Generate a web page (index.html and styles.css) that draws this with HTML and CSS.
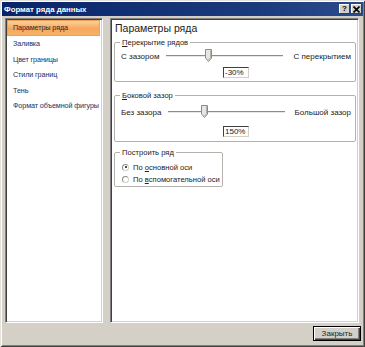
FILE: index.html
```html
<!DOCTYPE html>
<html>
<head>
<meta charset="utf-8">
<link rel="stylesheet" href="styles.css">
</head>
<body>
<div class="window">
  <div class="titlebar">
    <span class="title">Формат ряда данных</span>
    <div class="tbtns">
      <span class="tbtn">?</span>
      <span class="tbtn close">
        <svg width="7" height="7" viewBox="0 0 7 7"><path d="M0.5 0.5 L6.5 6.5 M6.5 0.5 L0.5 6.5" stroke="#000" stroke-width="1.6"/></svg>
      </span>
    </div>
  </div>
  <div class="main">
    <div class="panel nav">
      <div class="item sel">Параметры ряда</div>
      <div class="item">Заливка</div>
      <div class="item">Цвет границы</div>
      <div class="item">Стили границ</div>
      <div class="item">Тень</div>
      <div class="item">Формат объемной фигуры</div>
    </div>
    <div class="panel content">
      <div class="heading">Параметры ряда</div>
      <fieldset class="group g1">
        <legend><u>П</u>ерекрытие рядов</legend>
        <div class="slider-row">
          <span class="lbl">С зазором</span>
          <div class="track"><span class="thumb" style="left:36%"><svg width="7" height="13" viewBox="0 0 7 13"><path d="M0.5 0.5 H6.5 V9 L3.5 12.5 L0.5 9 Z" fill="#e8e6e0" stroke="#8a8a8a"/><path d="M5.5 1.5 V8.6 L3.5 11" fill="none" stroke="#b0aea8"/></svg></span></div>
          <span class="rlbl">С перекрытием</span>
        </div>
        <div class="value-row"><span class="input">-30%</span></div>
      </fieldset>
      <fieldset class="group g2">
        <legend><u>Б</u>оковой зазор</legend>
        <div class="slider-row">
          <span class="lbl">Без зазора</span>
          <div class="track"><span class="thumb" style="left:31%"><svg width="7" height="13" viewBox="0 0 7 13"><path d="M0.5 0.5 H6.5 V9 L3.5 12.5 L0.5 9 Z" fill="#e8e6e0" stroke="#8a8a8a"/><path d="M5.5 1.5 V8.6 L3.5 11" fill="none" stroke="#b0aea8"/></svg></span></div>
          <span class="rlbl">Большой зазор</span>
        </div>
        <div class="value-row"><span class="input">150%</span></div>
      </fieldset>
      <fieldset class="group g3">
        <legend>Построить ряд</legend>
        <div class="radio-row"><span class="radio on"></span><span>По <u>о</u>сновной оси</span></div>
        <div class="radio-row"><span class="radio"></span><span>По <u>в</u>спомогательной оси</span></div>
      </fieldset>
    </div>
  </div>
  <div class="footer">
    <button class="btn">Закрыть</button>
  </div>
</div>
</body>
</html>
```
FILE: styles.css
```css
html, body {
  margin: 0;
  padding: 0;
  background: #d4d0c8;
}
.window {
  width: 365px;
  height: 347px;
  box-sizing: border-box;
  padding: 2px;
  background: #d4d0c8;
  box-shadow: inset 1px 1px #e4e2dc, inset -1px -1px #404040, inset 2px 2px #fff, inset -2px -2px #808080;
  font-family: "Liberation Sans", Arial, sans-serif;
  font-size: 8px;
  color: #222;
  display: flex;
  flex-direction: column;
}
.titlebar {
  height: 14px;
  flex: none;
  background: linear-gradient(to right, #0a246a, #1b3a7c 70%, #2b4c8c);
  display: flex;
  align-items: center;
  padding: 0 1px 0 2px;
}
.title {
  color: #fff;
  font-weight: bold;
  font-size: 7.8px;
  flex: 1;
}
.tbtns {
  display: flex;
  gap: 1px;
}
.tbtn {
  width: 11px;
  height: 10px;
  box-sizing: border-box;
  background: #d4d0c8;
  box-shadow: inset -1px -1px #404040, inset 1px 1px #fff;
  font-weight: bold;
  font-size: 8px;
  color: #000;
  display: flex;
  align-items: center;
  justify-content: center;
  line-height: 1;
}
.main {
  height: 305px;
  flex: none;
  display: flex;
  gap: 7px;
  padding: 2px 4px 0 3px;
}
.panel {
  background: #fff;
  box-sizing: border-box;
  border: 1px solid;
  border-color: #808080 #fff #fff #808080;
  box-shadow: inset 1px 1px #404040, inset -1px -1px #d4d0c8;
  height: 305px;
}
.nav {
  width: 98px;
  padding: 1px 2px 0 1px;
}
.item {
  height: 15.6px;
  line-height: 15.6px;
  padding-left: 6px;
  color: #1d2f5e;
  white-space: nowrap;
  font-size: 7.2px;
  letter-spacing: -0.1px;
}
.item.sel {
  height: 16px;
  line-height: 16px;
  color: #2a2a2a;
  background: linear-gradient(to bottom, #fbd7a4 0%, #f6a75c 55%, #f7b46c 100%);
  box-shadow: inset 0 0 0 1px #f0a050;
}
.content {
  width: 249px;
  padding: 2px 2px 0 3px;
}
.heading {
  font-size: 10.5px;
  height: 17px;
  line-height: 14px;
  color: #222;
  padding-left: 1px;
}
.group {
  margin: 0;
  border: 1px solid #b4b2ac;
  border-radius: 2px;
  padding: 0 4px 0 6px;
  min-width: 0;
  white-space: nowrap;
}
.group legend {
  padding: 0 2px;
  margin-left: -1px;
  font-size: 7.6px;
  line-height: 9px;
  color: #222;
}
.group u {
  text-decoration: underline;
}
.g1 { height: 44px; box-sizing: border-box; }
.g2 { height: 51px; box-sizing: border-box; margin-top: 9px; }
.g3 { width: 109px; height: 39px; box-sizing: border-box; margin-top: 6px; }
.slider-row {
  display: flex;
  align-items: center;
  height: 14px;
  margin-top: 2px;
}
.lbl {
  width: 45px;
  flex: none;
}
.track {
  position: relative;
  width: 117px;
  height: 1px;
  flex: none;
  background: #8c8c8c;
  border-bottom: 1px solid #e8e8e8;
}
.thumb {
  position: absolute;
  top: -6px;
  width: 7px;
  height: 13px;
  margin-left: -3px;
}
.thumb svg { display: block; }
.rlbl {
  flex: 1;
  text-align: right;
}
.g2 .slider-row { margin-top: 5px; }
.g2 .lbl { width: 47px; }
.value-row {
  display: flex;
  justify-content: center;
  margin-top: 4px;
}
.g2 .value-row { margin-top: 7px; }
.input {
  width: 26px;
  height: 11px;
  box-sizing: border-box;
  border: 1px solid;
  border-color: #404040 #d4d0c8 #d4d0c8 #404040;
  font-size: 8px;
  line-height: 9px;
  padding-left: 1px;
  background: #fff;
}
.radio-row {
  display: flex;
  align-items: center;
  gap: 4px;
  height: 12px;
  padding-left: 1px;
  font-size: 7.6px;
}
.radio-row:first-of-type { margin-top: 4px; }
.radio {
  width: 7px;
  height: 7px;
  flex: none;
  box-sizing: border-box;
  border-radius: 50%;
  border: 1px solid #8a8a8a;
  border-right-color: #d0d0d0;
  border-bottom-color: #d0d0d0;
  background: #fff;
  position: relative;
}
.radio.on::after {
  content: "";
  position: absolute;
  left: 1.5px;
  top: 1.5px;
  width: 2px;
  height: 2px;
  border-radius: 50%;
  background: #111;
}
.footer {
  flex: 1;
  display: flex;
  justify-content: flex-end;
  align-items: flex-start;
  padding: 3px 2px 0 0;
}
.btn {
  width: 48px;
  height: 15px;
  margin: 0;
  padding: 0;
  font-family: "Liberation Sans", Arial, sans-serif;
  font-size: 8px;
  color: #222;
  background: #d4d0c8;
  border: 1px solid #000;
  box-shadow: inset 1px 1px #fff, inset -1px -1px #404040, inset -2px -2px #808080;
}
```
